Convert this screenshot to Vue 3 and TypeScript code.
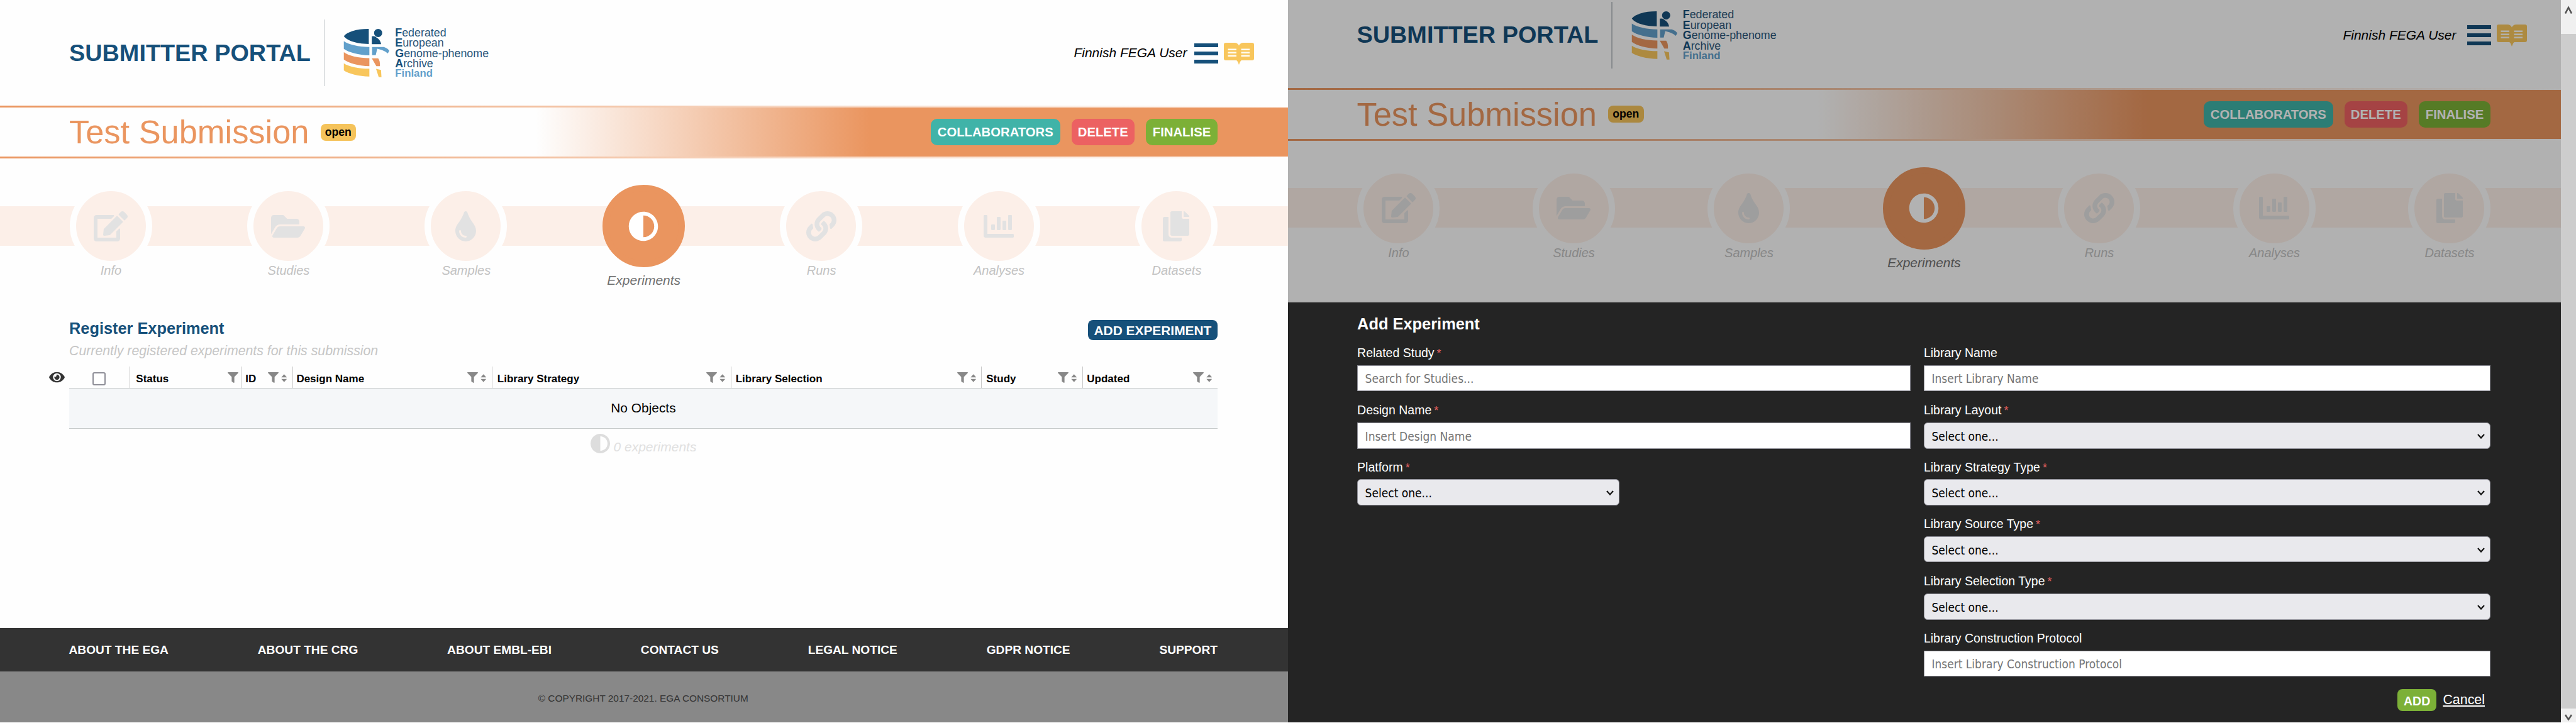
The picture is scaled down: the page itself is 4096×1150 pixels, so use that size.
<script setup lang="ts">
interface Step { label: string; vb: string; w: number; path: string; active?: boolean }
interface Column { label: string; width: number; pad: number; sort: boolean }
interface Field { label: string; required?: boolean; kind: 'input' | 'select'; placeholder: string; narrow?: boolean; height: number }

const adjust = 'M8 256c0 136.966 111.033 248 248 248s248-111.034 248-248S392.966 8 256 8 8 119.033 8 256zm248 184V72c101.705 0 184 82.311 184 184 0 101.705-82.311 184-184 184z'
const eye = 'M572.52 241.4C518.29 135.59 410.93 64 288 64S57.68 135.64 3.48 241.41a32.35 32.35 0 0 0 0 29.19C57.71 376.41 165.07 448 288 448s230.32-71.64 284.52-177.41a32.35 32.35 0 0 0 0-29.19zM288 400a144 144 0 1 1 144-144 143.93 143.93 0 0 1-144 144zm0-240a95.31 95.31 0 0 0-25.31 3.79 47.85 47.85 0 0 1-66.9 66.9A95.78 95.78 0 1 0 288 160z'
const filter = 'M487.976 0H24.028C2.71 0-8.047 25.866 7.058 40.971L192 225.941V432c0 7.831 3.821 15.17 10.237 19.662l80 55.98C298.02 518.69 320 507.493 320 487.98V225.941l184.947-184.97C520.021 25.896 509.338 0 487.976 0z'

const steps: Step[] = [
  { label: 'Info', vb: '0 0 576 512', w: 54, path: 'M402.6 83.2l90.2 90.2c3.8 3.8 3.8 10 0 13.8L274.4 405.6l-92.8 10.3c-12.4 1.4-22.9-9.1-21.5-21.5l10.3-92.8L388.8 83.2c3.8-3.8 10-3.8 13.8 0zm162-22.9l-48.8-48.8c-15.2-15.2-39.9-15.2-55.2 0l-35.4 35.4c-3.8 3.8-3.8 10 0 13.8l90.2 90.2c3.8 3.8 10 3.8 13.8 0l35.4-35.4c15.2-15.3 15.2-40 0-55.2zM384 346.2V448H64V128h229.8c3.2 0 6.2-1.3 8.5-3.5l40-40c7.6-7.6 2.2-20.5-8.5-20.5H48C21.5 64 0 85.5 0 112v352c0 26.5 21.5 48 48 48h352c26.5 0 48-21.5 48-48V306.2c0-10.7-12.9-16-20.5-8.5l-40 40c-2.2 2.3-3.5 5.3-3.5 8.5z' },
  { label: 'Studies', vb: '0 0 576 512', w: 54, path: 'M572.694 292.093L500.27 416.248A63.997 63.997 0 0 1 444.989 448H45.025c-18.523 0-30.064-20.093-20.731-36.093l72.424-124.155A64 64 0 0 1 152 256h399.964c18.523 0 30.064 20.093 20.73 36.093zM152 224h328v-48c0-26.51-21.49-48-48-48H272l-64-64H48C21.49 64 0 85.49 0 112v278.046l69.077-118.418C86.214 242.25 117.989 224 152 224z' },
  { label: 'Samples', vb: '0 0 352 512', w: 33, path: 'M205.22 22.09c-7.94-28.78-49.44-30.12-58.44 0C100.01 179.85 0 222.72 0 333.91 0 432.35 78.72 512 176 512s176-79.65 176-178.09c0-111.75-99.79-153.34-146.78-311.82zM176 448c-61.75 0-112-50.25-112-112 0-8.84 7.16-16 16-16s16 7.16 16 16c0 44.11 35.89 80 80 80 8.84 0 16 7.16 16 16s-7.16 16-16 16z' },
  { label: 'Experiments', vb: '0 0 512 512', w: 48, active: true, path: adjust },
  { label: 'Runs', vb: '0 0 512 512', w: 48, path: 'M326.612 185.391c59.747 59.809 58.927 155.698.36 214.59-.11.12-.24.25-.36.37l-67.2 67.2c-59.27 59.27-155.699 59.262-214.96 0-59.27-59.26-59.27-155.7 0-214.96l37.106-37.106c9.84-9.84 26.786-3.3 27.294 10.606.648 17.722 3.826 35.527 9.69 52.721 1.986 5.822.567 12.262-3.783 16.612l-13.087 13.087c-28.026 28.026-28.905 73.66-1.155 101.96 28.024 28.579 74.086 28.749 102.325.51l67.2-67.19c28.191-28.191 28.073-73.757 0-101.83-3.701-3.694-7.429-6.564-10.341-8.569a16.037 16.037 0 0 1-6.947-12.606c-.396-10.567 3.348-21.456 11.698-29.806l21.054-21.055c5.521-5.521 14.182-6.199 20.584-1.731a152.482 152.482 0 0 1 20.522 17.197zM467.547 44.449c-59.261-59.262-155.69-59.27-214.96 0l-67.2 67.2c-.12.12-.25.25-.36.37-58.566 58.892-59.387 154.781.36 214.59a152.454 152.454 0 0 0 20.521 17.196c6.402 4.468 15.064 3.789 20.584-1.731l21.054-21.055c8.35-8.35 12.094-19.239 11.698-29.806a16.037 16.037 0 0 0-6.947-12.606c-2.912-2.005-6.64-4.875-10.341-8.569-28.073-28.073-28.191-73.639 0-101.83l67.2-67.19c28.239-28.239 74.3-28.069 102.325.51 27.75 28.3 26.872 73.934-1.155 101.96l-13.087 13.087c-4.35 4.35-5.769 10.79-3.783 16.612 5.864 17.194 9.042 34.999 9.69 52.721.509 13.906 17.454 20.446 27.294 10.606l37.106-37.106c59.271-59.259 59.271-155.699.001-214.959z' },
  { label: 'Analyses', vb: '0 0 512 512', w: 48, path: 'M332.8 320h38.4c6.4 0 12.8-6.4 12.8-12.8V172.8c0-6.4-6.4-12.8-12.8-12.8h-38.4c-6.4 0-12.8 6.4-12.8 12.8v134.4c0 6.4 6.4 12.8 12.8 12.8zm96 0h38.4c6.4 0 12.8-6.4 12.8-12.8V76.8c0-6.4-6.4-12.8-12.8-12.8h-38.4c-6.4 0-12.8 6.4-12.8 12.8v230.4c0 6.4 6.4 12.8 12.8 12.8zm-288 0h38.4c6.4 0 12.8-6.4 12.8-12.8v-70.4c0-6.4-6.4-12.8-12.8-12.8h-38.4c-6.4 0-12.8 6.4-12.8 12.8v70.4c0 6.4 6.4 12.8 12.8 12.8zm96 0h38.4c6.4 0 12.8-6.4 12.8-12.8V108.8c0-6.4-6.4-12.8-12.8-12.8h-38.4c-6.4 0-12.8 6.4-12.8 12.8v198.4c0 6.4 6.4 12.8 12.8 12.8zM496 384H64V80c0-8.84-7.16-16-16-16H16C7.16 64 0 71.16 0 80v336c0 17.67 14.33 32 32 32h464c8.84 0 16-7.16 16-16v-32c0-8.84-7.16-16-16-16z' },
  { label: 'Datasets', vb: '0 0 448 512', w: 42, path: 'M320 448v40c0 13.255-10.745 24-24 24H24c-13.255 0-24-10.745-24-24V120c0-13.255 10.745-24 24-24h72v296c0 30.879 25.121 56 56 56h168zm0-344V0H152c-13.255 0-24 10.745-24 24v368c0 13.255 10.745 24 24 24h272c13.255 0 24-10.745 24-24V128H344c-13.2 0-24-10.8-24-24zm120.971-31.029L375.029 7.029A24 24 0 0 0 358.059 0H352v96h96v-6.059a24 24 0 0 0-7.029-16.97z' },
]

const columns: Column[] = [
  { label: 'Status', width: 177, pad: 9, sort: false },
  { label: 'ID', width: 81.6, pad: 6, sort: true },
  { label: 'Design Name', width: 316.9, pad: 5.5, sort: true },
  { label: 'Library Strategy', width: 379.9, pad: 8, sort: true },
  { label: 'Library Selection', width: 398.6, pad: 7, sort: true },
  { label: 'Study', width: 160.5, pad: 7, sort: true },
  { label: 'Updated', width: 214.5, pad: 6.5, sort: true },
]

const leftFields: Field[] = [
  { label: 'Related Study', required: true, kind: 'input', placeholder: 'Search for Studies...', height: 40.5 },
  { label: 'Design Name', required: true, kind: 'input', placeholder: 'Insert Design Name', height: 42 },
  { label: 'Platform', required: true, kind: 'select', placeholder: 'Select one...', narrow: true, height: 42 },
]
const rightFields: Field[] = [
  { label: 'Library Name', kind: 'input', placeholder: 'Insert Library Name', height: 40.5 },
  { label: 'Library Layout', required: true, kind: 'select', placeholder: 'Select one...', height: 42 },
  { label: 'Library Strategy Type', required: true, kind: 'select', placeholder: 'Select one...', height: 42 },
  { label: 'Library Source Type', required: true, kind: 'select', placeholder: 'Select one...', height: 41 },
  { label: 'Library Selection Type', required: true, kind: 'select', placeholder: 'Select one...', height: 42 },
  { label: 'Library Construction Protocol', kind: 'input', placeholder: 'Insert Library Construction Protocol', height: 41 },
]
const fieldColumns = [leftFields, rightFields]
const footerLinks = ['ABOUT THE EGA', 'ABOUT THE CRG', 'ABOUT EMBL-EBI', 'CONTACT US', 'LEGAL NOTICE', 'GDPR NOTICE', 'SUPPORT']
const pages = ['list', 'form']
</script>

<template>
  <div class="screen">
    <div v-for="page in pages" :key="page" class="page" :class="page">
      <div class="top">
        <header class="header">
          <div class="brand">SUBMITTER PORTAL</div>
          <div class="divider"></div>
          <svg class="logo" viewBox="50 35 305 330">
            <path fill="#16507a" d="M218 43V143C125 140 75 120 53 91C75 62 140 42 218 43Z" />
            <path fill="#62a0cb" d="M53 124C85 146 150 162 222 163V218C150 215 85 199 53 175Z" />
            <path fill="#ea955f" d="M53 197C85 221 150 236 222 237V290C150 287 85 270 53 246Z" />
            <path fill="#f8c65c" d="M53 271C85 293 150 306 222 307V359C150 356 85 341 53 318Z" />
            <circle fill="#16507a" cx="280" cy="70" r="27" />
            <path fill="#16507a" d="M238 92Q262 88 270 102Q292 112 300 144H238Z" />
            <path fill="#62a0cb" d="M240 163H318Q345 172 354 188L344 206Q325 190 304 183L274 174L264 217H240Z" />
            <path fill="#ea955f" d="M238 238H280Q294 255 292 290H268Z" />
            <path fill="#f8c65c" d="M266 308L299 315L302 363H284Z" />
          </svg>
          <div class="name">
            <div><b>F</b>ederated</div>
            <div><b>E</b>uropean</div>
            <div><b>G</b>enome-phenome</div>
            <div><b>A</b>rchive</div>
            <div class="country">Finland</div>
          </div>
          <div class="user">Finnish FEGA User</div>
          <svg class="burger" viewBox="0 0 38 32"><path fill="#16507a" d="M0 0h38v6H0zM0 13h38v6H0zM0 26h38v6H0z" /></svg>
          <svg class="book" viewBox="0 0 48 35">
            <path fill="#f8c65c" d="M3 0H17Q22 0 24 4.500Q26 0 31 0H45Q48 0 48 3V25Q48 28 45 28H28Q26 29 24 35Q22 29 20 28H3Q0 28 0 25V3Q0 0 3 0Z" />
            <path fill="#fffdf4" d="M6.500 9.500H20v2.500H6.500zM27.500 9.500H41v2.500H27.500zM6.500 14.500H20v2.500H6.500zM27.500 14.500H41v2.500H27.500zM6.500 19.500H20v2.500H6.500zM27.500 19.500H41v2.500H27.500z" />
          </svg>
        </header>
        <div class="titlebar">
          <h1>Test Submission</h1>
          <span class="state">open</span>
          <div class="actions">
            <span class="btn teal">COLLABORATORS</span>
            <span class="btn red">DELETE</span>
            <span class="btn green">FINALISE</span>
          </div>
        </div>
        <nav class="steps">
          <div v-for="s in steps" :key="s.label" class="step" :class="{ active: s.active }">
            <div class="disc"><svg :viewBox="s.vb" :width="s.w" height="48"><path :d="s.path" /></svg></div>
            <div class="label">{{ s.label }}</div>
          </div>
        </nav>
      </div>

      <template v-if="page === 'list'">
        <main class="main">
          <div class="heading">
            <h2>Register Experiment</h2>
            <span class="add">ADD EXPERIMENT</span>
          </div>
          <p class="sub">Currently registered experiments for this submission</p>
          <div class="tablewrap">
            <svg class="eye" viewBox="0 0 576 512"><path fill="#333" :d="eye" /></svg>
            <div class="table">
              <div class="thead">
                <div class="check"><span class="box"></span></div>
                <div v-for="c in columns" :key="c.label" class="col" :style="{ width: c.width + 'px', paddingLeft: c.pad + 'px' }">
                  <span class="colname">{{ c.label }}</span>
                  <svg class="filter" viewBox="0 0 512 512"><path fill="#888" :d="filter" /></svg>
                  <svg v-if="c.sort" class="sort" viewBox="0 0 10 13"><path fill="#888" d="M5 0L9.700 5.200H0.300zM5 13L9.700 7.800H0.300z" /></svg>
                </div>
              </div>
              <div class="empty">No Objects</div>
            </div>
          </div>
          <div class="count">
            <svg viewBox="8 8 496 496"><path fill="#ddd" :d="adjust" /></svg>
            <span>0 experiments</span>
          </div>
        </main>
        <footer>
          <div class="links"><span v-for="l in footerLinks" :key="l">{{ l }}</span></div>
          <div class="copy">© COPYRIGHT 2017-2021. EGA CONSORTIUM</div>
        </footer>
      </template>

      <section v-else class="modal">
        <h2>Add Experiment</h2>
        <div class="fields">
          <div v-for="(fields, i) in fieldColumns" :key="i" class="fieldcol">
            <div v-for="f in fields" :key="f.label" class="field">
              <div class="flabel">{{ f.label }}<span v-if="f.required" class="req">*</span></div>
              <div class="control" :class="[f.kind, { narrow: f.narrow }]" :style="{ height: f.height + 'px' }">
                <span>{{ f.placeholder }}</span>
                <svg v-if="f.kind === 'select'" viewBox="0 0 12 8"><path d="M1 1L6 6.500L11 1" fill="none" stroke="#111" stroke-width="2.200" /></svg>
              </div>
            </div>
          </div>
        </div>
        <div class="submit"><span class="ok">ADD</span><span class="cancel">Cancel</span></div>
      </section>
    </div>
    <div class="scrollbar">
      <div class="cap"><svg viewBox="0 0 12 14"><path d="M1 12.500L6 3L11 12.500" fill="none" stroke="#555" stroke-width="2.600" /></svg></div>
      <div class="end"><svg viewBox="0 0 12 10"><path d="M1 1L6 8.500L11 1" fill="none" stroke="#555" stroke-width="2.600" /></svg></div>
    </div>
  </div>
</template>

<style>
body { background: #fff; overflow: hidden; }
</style>

<style scoped>
* { box-sizing: border-box; }
.screen { display: flex; width: 4096px; height: 1149px; overflow: hidden; background: #fff; font-family: "Liberation Sans", Arial, sans-serif; color: #000; }
.page { display: flex; flex-direction: column; flex: none; height: 1149px; overflow: hidden; background: #fefefe; }
.page.list { width: 2047.500px; }
.page.form { width: 2024px; position: relative; }
.top { flex: none; height: 505px; background: #fefefe; }
.form .top { margin-top: -28.400px; height: 509.400px; position: relative; }
.form .top::after { content: ""; position: absolute; inset: 0; background: rgba(0, 0, 0, 0.3); }
h1, h2, p { margin: 0; }

.header { display: flex; align-items: center; height: 168px; padding: 0 54px 0 110px; }
.brand { width: 404.700px; font-size: 37.850px; font-weight: bold; color: #16507a; white-space: nowrap; }
.divider { width: 1.500px; height: 106px; background: #c3c8cc; }
.logo { width: 73.300px; height: 79.300px; margin-left: 30px; }
.name { margin: 1.500px 0 0 8.800px; font-size: 17.850px; line-height: 16.400px; color: #2b567a; white-space: nowrap; }
.name b { color: #16507a; }
.name .country { color: #62a0cb; font-weight: bold; font-size: 16.800px; }
.user { margin-left: auto; font-size: 21px; font-style: italic; white-space: nowrap; }
.burger { width: 38px; height: 32px; margin: 1px 9px 0 11px; }
.form .burger { margin-left: 17px; }
.book { width: 48px; height: 35px; margin-top: 2px; }

.titlebar { display: flex; align-items: center; height: 84.400px; padding: 0 111.500px 0 110px;
  background: linear-gradient(to right, #ea955f, #fff) 0 0 / 100% 3px no-repeat, linear-gradient(to right, #ea955f, #fff) 0 100% / 100% 3px no-repeat, linear-gradient(to right, #fefefe 41.600%, #ea955f 67.500%); }
h1 { width: 399.500px; font-size: 52.400px; line-height: 60px; font-weight: normal; color: #ea955f; white-space: nowrap; }
.state { width: 56.500px; height: 27px; border-radius: 8px; background: #f5c35b; font-size: 17.600px; line-height: 26.500px; font-weight: bold; text-align: center; }
.actions { display: flex; gap: 18px; margin-left: auto; }
.btn { height: 42.500px; border-radius: 10px; font-size: 20.300px; line-height: 43px; font-weight: bold; color: #fff; text-align: center; white-space: nowrap; }
.teal { width: 205.500px; background: #40b3a8; }
.red { width: 100.500px; background: #ec6162; }
.green { width: 114px; background: #7cb037; }

.steps { display: flex; justify-content: space-between; padding: 41.700px 111.500px 0 110.500px; background: linear-gradient(#fcefe8, #fcefe8) 0 75.300px / 100% 63px no-repeat; }
.step { width: 131px; }
.disc { display: flex; align-items: center; justify-content: center; height: 131px; border: 10px solid #fefefe; border-radius: 50%; background: #fcefe8; fill: #e2e2e2; }
.label { margin-top: -7px; padding-left: 1px; font-size: 20px; line-height: 24px; font-style: italic; text-align: center; color: #c2c2c2; }
.active .disc { border-color: #ea955f; background: #ea955f; fill: #fff; }
.active .label { margin-top: 9px; font-size: 21px; color: #707070; }

.main { flex: none; height: 494px; padding: 0 111.600px 0 110px; }
.heading { display: flex; align-items: flex-start; justify-content: space-between; height: 41px; }
.heading h2 { margin-top: 1.500px; font-size: 25.350px; line-height: 30px; color: #16507a; }
.add { width: 206px; height: 32px; margin-top: 4.200px; border-radius: 8px; background: #16507a; color: #fff; font-size: 20.900px; line-height: 34px; font-weight: bold; text-align: center; white-space: nowrap; }
.sub { font-size: 21.300px; line-height: 24px; font-style: italic; color: #c6c6c6; height: 37px; }
.tablewrap { display: flex; align-items: flex-start; margin-left: -32px; }
.eye { flex: none; width: 25px; height: 22px; margin: 5.500px 7px 0 0; }
.table { flex: 1; }
.thead { display: flex; height: 34.500px; border-bottom: 1.500px solid #c6caca; }
.check { width: 96.300px; flex: none; padding: 9.400px 0 0 36.800px; }
.box { display: block; width: 21px; height: 21px; border: 2px solid #8f8f98; border-radius: 3px; background: #fff; }
.col { display: flex; align-items: flex-start; flex: none; padding: 9.400px 8px 0 0; border-left: 1px solid #c8c8c8; }
.col:nth-child(2) { padding-right: 4.500px; }
.colname { flex: 1; font-size: 17px; line-height: 22px; font-weight: bold; white-space: nowrap; }
.filter { width: 17px; height: 17px; }
.sort { width: 9.500px; height: 13px; margin: 2.400px 0 0 4px; }
.empty { height: 64px; background: #f5f7f9; border-bottom: 1.500px solid #c6caca; font-size: 20.900px; line-height: 61px; text-align: center; }
.count { display: flex; justify-content: center; align-items: flex-start; padding-top: 8px; color: #e0e0e0; font-size: 21px; line-height: 41px; font-style: italic; }
.count svg { width: 31px; height: 31px; margin-right: 6px; }

.links { display: flex; justify-content: space-between; height: 69.300px; padding: 0 111.500px 0 109.500px; background: #333; color: #fff; font-size: 19.150px; line-height: 69.600px; font-weight: bold; }
.copy { height: 82px; background: #888; color: #333; font-size: 15.400px; line-height: 86px; text-align: center; padding-right: 2px; }

.modal { flex: 1; background: #242424; padding: 25.400px 111.500px 0 110.600px; color: #fff; }
.modal h2 { height: 44px; font-size: 25.400px; line-height: 16.800px; padding-top: 0.500px; white-space: nowrap; }
.fields { display: flex; gap: 21.300px; height: 541px; }
.fieldcol:first-child { width: 879.500px; }
.fieldcol:last-child { width: 901px; }
.field { height: 90.700px; }
.flabel { height: 30.700px; font-size: 19.500px; line-height: 22px; white-space: nowrap; }
.req { margin-left: 4px; color: #e0605f; font-size: 18px; }
.control { display: flex; align-items: center; justify-content: space-between; padding: 2px 8px 0 11.500px; font-family: "DejaVu Sans Condensed", "DejaVu Sans", sans-serif; font-stretch: condensed; font-size: 19px; border: 1.500px solid #8f8f98; white-space: nowrap; }
.control svg { width: 12px; height: 8px; }
.input { background: #fff; color: #757575; }
.select { background: #e9e9ed; color: #000; border-radius: 6px; }
.narrow { width: 417px; }
.submit { display: flex; justify-content: flex-end; padding-right: 9px; }
.ok { width: 62.600px; height: 34.800px; margin-top: 5px; border-radius: 8px; background: #7cb037; font-size: 19.500px; line-height: 38.500px; font-weight: bold; text-align: center; }
.cancel { margin: 5px 0 0 10px; font-size: 21.400px; line-height: 35.500px; text-decoration: underline; }

.scrollbar { display: flex; flex-direction: column; justify-content: space-between; flex: 1; background: #cdcdcd; }
.cap { display: flex; justify-content: center; height: 54px; padding-top: 9px; background: #f0f0f0; }
.cap svg { width: 12px; height: 14px; }
.end { display: flex; justify-content: center; height: 22.500px; padding-top: 9px; background: #f0f0f0; }
.end svg { width: 12px; height: 10px; }
</style>
